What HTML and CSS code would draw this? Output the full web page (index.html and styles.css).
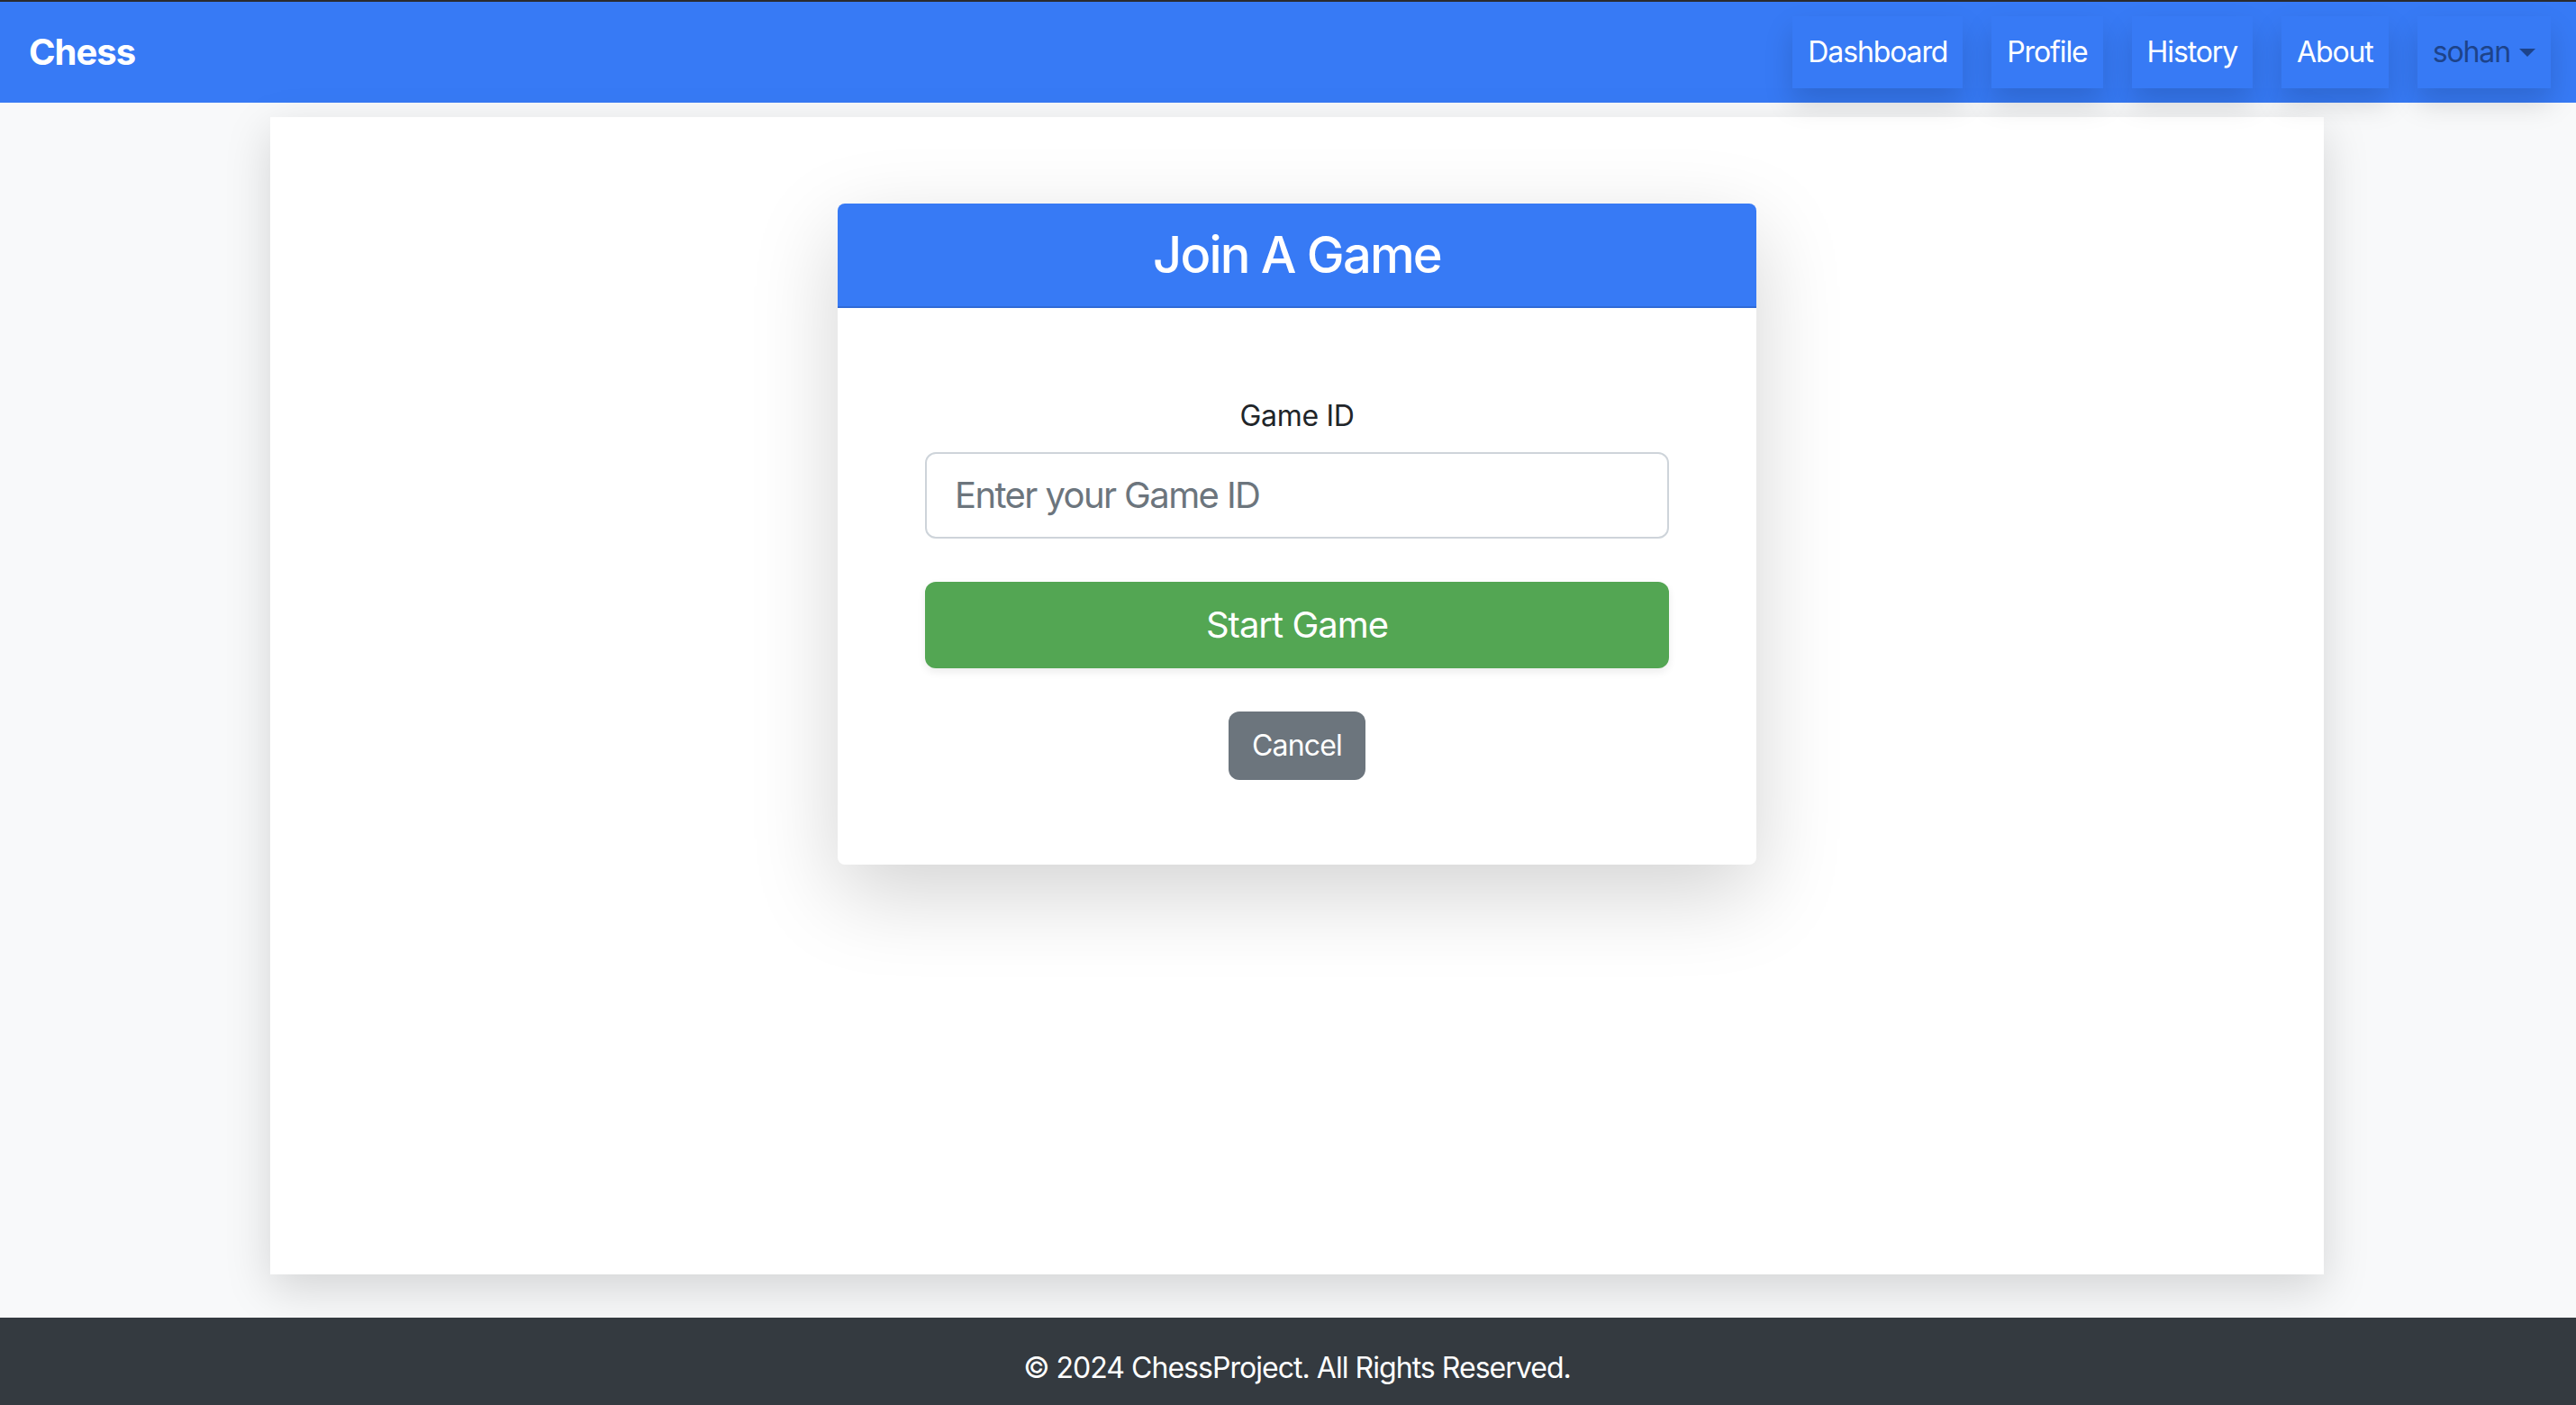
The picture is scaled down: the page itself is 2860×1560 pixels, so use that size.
FILE: index.html
```html
<!DOCTYPE html>
<html lang="en">
<head>
<meta charset="utf-8">
<title>Chess - Join A Game</title>
<link rel="stylesheet" href="styles.css">
</head>
<body>
<nav class="navbar">
  <a class="brand" href="#">Chess</a>
  <ul class="nav">
    <li><a class="nav-link" href="#">Dashboard</a></li>
    <li><a class="nav-link" href="#">Profile</a></li>
    <li><a class="nav-link" href="#">History</a></li>
    <li><a class="nav-link" href="#">About</a></li>
    <li><a class="nav-link user" href="#">sohan<span class="caret"></span></a></li>
  </ul>
</nav>
<main class="main">
  <section class="panel">
    <div class="card">
      <div class="card-header"><h3 class="card-title">Join A Game</h3></div>
      <form class="card-body">
        <label class="form-label" for="gid">Game ID</label>
        <input class="form-control" id="gid" type="text" placeholder="Enter your Game ID">
        <button class="btn btn-success" type="button">Start Game</button>
        <button class="btn btn-secondary" type="button">Cancel</button>
      </form>
    </div>
  </section>
</main>
<footer class="footer">© 2024 ChessProject. All Rights Reserved.</footer>
</body>
</html>
```

FILE: styles.css
```css
* { box-sizing: border-box; }

html, body {
  margin: 0;
  padding: 0;
}

body {
  background: #f8f9fa;
  font-family: Inter, "Noto Sans", "Liberation Sans", sans-serif;
  color: #212529;
  letter-spacing: -0.02em;
}

.navbar {
  display: flex;
  align-items: center;
  justify-content: space-between;
  background: #377af5;
  border-top: 2px solid #2a2b2e;
  padding: 16px 28px 16px 32px;
  height: 114px;
}

.brand {
  color: #fff;
  font-size: 40px;
  font-weight: 700;
  letter-spacing: -1px;
  text-decoration: none;
  line-height: 48px;
}

.nav {
  display: flex;
  gap: 32px;
  list-style: none;
  margin: 0;
  padding: 0;
}

.nav-link {
  display: flex;
  align-items: center;
  padding: 16px 17px;
  font-size: 32px;
  line-height: 48px;
  letter-spacing: -0.035em;
  color: #fff;
  text-decoration: none;
  background: #377af5;
  box-shadow: 0 16px 32px rgba(0, 0, 0, 0.15);
}

.nav-link.user {
  color: #1d438a;
}

.caret {
  display: inline-block;
  width: 0;
  height: 0;
  margin-left: 10px;
  border-top: 9px solid #1d438a;
  border-left: 9px solid transparent;
  border-right: 9px solid transparent;
}

.main {
  padding: 16px 0 48px 0;
}

.panel {
  margin-left: 300px;
  width: 2280px;
  height: 1285px;
  background: #fff;
  box-shadow: 0 16px 48px rgba(0, 0, 0, 0.15);
  padding-top: 96px;
  display: flex;
  justify-content: center;
  align-items: flex-start;
}

.card {
  width: 1020px;
  background: #fff;
  border-radius: 8px;
  overflow: hidden;
  box-shadow: 0 32px 96px rgba(0, 0, 0, 0.175);
}

.card-header {
  background: #377af5;
  color: #fff;
  text-align: center;
  padding: 24px;
  border-bottom: 2px solid rgba(0, 0, 0, 0.125);
}

.card-title {
  margin: 0;
  font-size: 56px;
  font-weight: 500;
  line-height: 66px;
  letter-spacing: -1.8px;
}

.card-body {
  display: flex;
  flex-direction: column;
  padding: 96px 97px 94px;
}

.form-label {
  display: block;
  text-align: center;
  font-size: 32px;
  line-height: 48px;
  margin-bottom: 16px;
  color: #212529;
}

.form-control {
  width: 100%;
  padding: 16px 31px;
  font-family: inherit;
  font-size: 40px;
  line-height: 60px;
  letter-spacing: -0.04em;
  color: #212529;
  border: 2px solid #ced4da;
  border-radius: 12px;
  background: #fff;
  outline: none;
}

.form-control::placeholder {
  color: #6c757d;
  opacity: 1;
}

.btn {
  font-family: inherit;
  color: #fff;
  border: 2px solid transparent;
  border-radius: 12px;
  cursor: pointer;
  letter-spacing: -0.025em;
}

.btn-success {
  width: 100%;
  margin-top: 48px;
  padding: 16px 32px;
  font-size: 40px;
  line-height: 60px;
  background: #53a653;
  box-shadow: 0 4px 10px rgba(0, 0, 0, 0.08);
}

.btn-secondary {
  align-self: center;
  margin-top: 48px;
  padding: 12px 24px;
  font-size: 32px;
  line-height: 48px;
  background: #6c757d;
}

.footer {
  background: #343a40;
  color: #fff;
  text-align: center;
  padding: 32px 12px 32px 32px;
  font-size: 32px;
  line-height: 48px;
  letter-spacing: -0.03em;
}
```
